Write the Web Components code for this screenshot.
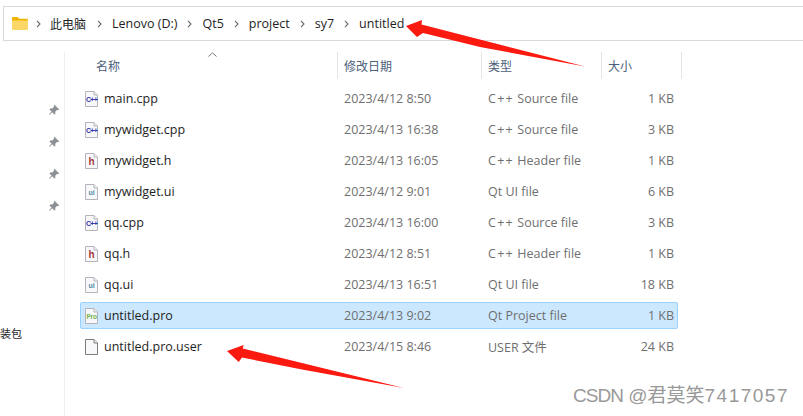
<!DOCTYPE html>
<html>
<head>
<meta charset="utf-8">
<style>
html,body{margin:0;padding:0;background:#fff;}
body{width:803px;height:416px;overflow:hidden;position:relative;font-family:"Open Sans","Noto Sans CJK SC",sans-serif;}
</style>
</head>
<body>
<address-bar></address-bar>
<explorer-pane>
  <side-panel slot="side"></side-panel>
  <file-list slot="list"></file-list>
</explorer-pane>
<red-arrow points="406,26 422,20 421.5,24.5 585,66.5 480,47 423,33 417,37"></red-arrow>
<red-arrow points="227,351 243.7,345 242.7,348.5 404,388 302,369.5 242,357.5 238.7,362"></red-arrow>
<water-mark></water-mark>

<script>
const FILES = [
  ["main.cpp","2023/4/12 8:50","C++ Source file","1 KB","cpp"],
  ["mywidget.cpp","2023/4/13 16:38","C++ Source file","3 KB","cpp"],
  ["mywidget.h","2023/4/13 16:05","C++ Header file","1 KB","h"],
  ["mywidget.ui","2023/4/12 9:01","Qt UI file","6 KB","ui"],
  ["qq.cpp","2023/4/13 16:00","C++ Source file","3 KB","cpp"],
  ["qq.h","2023/4/12 8:51","C++ Header file","1 KB","h"],
  ["qq.ui","2023/4/13 16:51","Qt UI file","18 KB","ui"],
  ["untitled.pro","2023/4/13 9:02","Qt Project file","1 KB","pro"],
  ["untitled.pro.user","2023/4/15 8:46","USER 文件","24 KB","blank"]
];

class AddressBar extends HTMLElement {
  constructor(){
    super();
    this.attachShadow({mode:"open"});
  }
  connectedCallback(){
    const parts = ["此电脑","Lenovo (D:)","Qt5","project","sy7","untitled"];
    const chev = `<svg class="chev" width="5" height="8" viewBox="0 0 5 8"><path d="M1 .8 4 4 1 7.2" fill="none" stroke="#666" stroke-width="1.1"/></svg>`;
    this.shadowRoot.innerHTML = `
      <style>
      :host{
        display:flex;
        align-items:center;
        box-sizing:border-box;
        height:35px;
        margin:6px 0 0 3px;
        padding:0 0 0 8px;
        border:1px solid #d9d9d9;
        border-right:none;
        font-size:12.5px;
        color:#1e1e1e;
      }
      .chev{margin:0 10px;flex:none;}
      .folder + .chev{margin:0 9px 0 8px;}
      span{white-space:nowrap;}
      span.cjk{font-size:12px;margin-right:1px;}
      </style>
      <svg class="folder" width="16" height="13" viewBox="0 0 16 13">
        <path d="M0 1.5C0 .7.6 0 1.4 0h4.2l1.600 1.800h7.400c.8 0 1.400.6 1.400 1.400V4H0z" fill="#f0b400"/>
        <path d="M0 3.400h16v8.200c0 .8-.6 1.400-1.400 1.400H1.400C.6 13 0 12.400 0 11.600z" fill="#fbd767"/>
      </svg>
      ${chev}${parts.map((p,i)=>`<span class="${i?"":"cjk"}">${p}</span>`).join(chev)}
    `;
  }
}
customElements.define("address-bar", AddressBar);

class ExplorerPane extends HTMLElement {
  constructor(){
    super();
    this.attachShadow({mode:"open"}).innerHTML = `
      <style>
      :host{display:flex;height:375px;}
      .side{flex:none;width:64px;border-right:1px solid #efefef;margin-top:11px;overflow:hidden;}
      .main{flex:1;min-width:0;}
      </style>
      <div class="side"><slot name="side"></slot></div>
      <div class="main"><slot name="list"></slot></div>
    `;
  }
}
customElements.define("explorer-pane", ExplorerPane);

class SidePanel extends HTMLElement {
  constructor(){
    super();
    const pin = `<svg width="12" height="12" viewBox="0 0 12 12"><path d="M6.5 .8 11.2 5.500 10.200 6.200 9.200 5.800 7.200 7.800 7.400 9.800 6.400 10.600 4.200 8.200 1.400 11 1 10.600 3.600 7.600 1.400 5.400 2.200 4.400 4.200 4.600 6.200 2.600 5.800 1.600Z" fill="#8c9096"/></svg>`;
    this.attachShadow({mode:"open"}).innerHTML = `
      <style>
      :host{display:flex;flex-direction:column;align-items:stretch;padding-top:52px;}
      .pins{display:flex;flex-direction:column;gap:20px;align-items:flex-end;padding-right:4px;}
      svg{display:block;}
      .label{margin:114px 0 0 0;font-size:11px;line-height:16px;color:#1e1e1e;white-space:nowrap;}
      </style>
      <div class="pins">${pin}${pin}${pin}${pin}</div>
      <div class="label">装包</div>
    `;
  }
}
customElements.define("side-panel", SidePanel);

class FileIcon extends HTMLElement {
  constructor(){
    super();
    this.attachShadow({mode:"open"});
  }
  connectedCallback(){
    const kind = this.getAttribute("kind");
    const marks = {
      cpp:`<text x="6.600" y="10.600" font-size="7" font-weight="700" fill="#2f35a8" text-anchor="middle" letter-spacing="-.7">C++</text>`,
      h:`<text x="6.600" y="12" font-size="10" font-weight="700" fill="#a53a3a" text-anchor="middle">h</text>`,
      ui:`<text x="6.600" y="11" font-size="7" font-weight="600" fill="#4f8ba8" text-anchor="middle">ui</text>`,
      pro:`<text x="6.600" y="10.800" font-size="6.600" font-weight="600" fill="#6fb24e" text-anchor="middle" letter-spacing="-.2">Pro</text>`,
      blank:""
    };
    const stroke = kind === "blank" ? "#7c7c7c" : "#b4b4bc";
    this.shadowRoot.innerHTML = `
      <style>
      :host{display:block;width:14px;height:16px;}
      svg{display:block;font-family:"Liberation Sans",sans-serif;}
      </style>
      <svg width="14" height="16" viewBox="0 0 14 16">
        <path d="M.5.5H9L12.500 4V15.500H.5Z" fill="#f8f8fa" stroke="${stroke}"/>
        <path d="M9 .5V4H12.500" fill="#f0f0f0" stroke="${stroke}"/>
        ${marks[kind]}
      </svg>
    `;
  }
}
customElements.define("file-icon", FileIcon);

class FileRow extends HTMLElement {
  constructor(){
    super();
    this.attachShadow({mode:"open"});
  }
  set data(f){
    this.shadowRoot.innerHTML = `
      <style>
      :host{
        display:grid;
        grid-template-columns:19px 240px 144px 1fr auto;
        align-items:center;
        box-sizing:border-box;
        height:27px;
        padding:0 3px 0 4px;
        border:1px solid transparent;
        border-radius:2px;
        font-size:12.5px;
        color:#6f6f6f;
        white-space:nowrap;
      }
      :host([selected]){background:#cce8ff;border-color:#99d1ff;}
      .name{color:#1e1e1e;}
      .cpp{letter-spacing:1.3px;}
      </style>
      <file-icon kind="${f[4]}"></file-icon>
      <div class="name">${f[0]}</div>
      <div>${f[1]}</div>
      <div>${f[2].replace("C++ ",'<span class="cpp">C++</span> ')}</div>
      <div>${f[3]}</div>
    `;
  }
}
customElements.define("file-row", FileRow);

class FileList extends HTMLElement {
  constructor(){
    super();
    this.attachShadow({mode:"open"}).innerHTML = `
      <style>
      :host{display:block;padding-top:11px;}
      .head{
        position:relative;
        display:grid;
        grid-template-columns:273px 144px 120px 80px;
        width:617px;
        height:27px;
        font-size:12px;
        color:#4c607a;
      }
      .head div{
        display:flex;
        align-items:center;
        padding-left:6px;
        border-right:1px solid #e5e5e5;
        white-space:nowrap;
      }
      .head div:first-child{padding-left:31px;}
      .sort{position:absolute;left:143px;top:0;}
      .rows{display:flex;flex-direction:column;gap:4px;width:598px;margin:6px 0 0 15px;}
      </style>
      <div class="head">
        <div>名称</div><div>修改日期</div><div>类型</div><div>大小</div>
        <svg class="sort" width="9" height="5" viewBox="0 0 9 5"><path d="M.5 4.500 4.500 .8 8.500 4.500" fill="none" stroke="#777"/></svg>
      </div>
      <div class="rows"></div>
    `;
    const rows = this.shadowRoot.querySelector(".rows");
    FILES.forEach(f => {
      const r = document.createElement("file-row");
      r.data = f;
      if(f[0] === "untitled.pro") r.setAttribute("selected","");
      rows.appendChild(r);
    });
  }
}
customElements.define("file-list", FileList);

// the red annotation arrows lie over the window
class RedArrow extends HTMLElement {
  constructor(){
    super();
    this.attachShadow({mode:"open"});
  }
  connectedCallback(){
    this.shadowRoot.innerHTML = `
      <style>:host{position:absolute;left:0;top:0;pointer-events:none;}svg{display:block;}</style>
      <svg width="803" height="416"><polygon points="${this.getAttribute("points")}" fill="#fb1a10"/></svg>
    `;
  }
}
customElements.define("red-arrow", RedArrow);

class WaterMark extends HTMLElement {
  constructor(){
    super();
    this.attachShadow({mode:"open"}).innerHTML = `
      <style>
      :host{position:absolute;right:14px;top:385px;font-family:"Liberation Sans","Noto Sans CJK SC",sans-serif;font-size:19px;line-height:22px;color:#999;white-space:nowrap;}
      .a{letter-spacing:-1px;}
      .n{letter-spacing:1.500px;}
      </style>
      <span class="a">CSDN</span> @君莫笑<span class="n">7417057</span>
    `;
  }
}
customElements.define("water-mark", WaterMark);
</script>
</body>
</html>
